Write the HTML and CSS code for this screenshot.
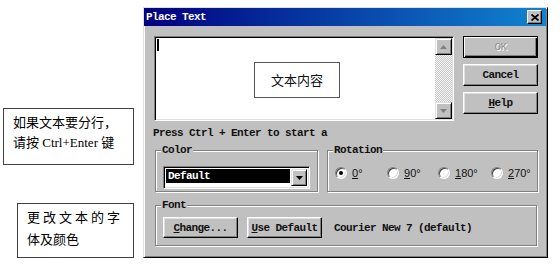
FILE: index.html
```html
<!DOCTYPE html>
<html lang="zh">
<head>
<meta charset="utf-8">
<title>Place Text</title>
<link rel="stylesheet" href="styles.css">
</head>
<body>
<div class="page">
  <div class="notes">
    <div class="note note-1">如果文本要分行，<br>请按 Ctrl+Enter 键</div>
    <div class="note note-2"><span class="spaced">更改文本的字</span><br>体及颜色</div>
  </div>
  <div class="dialog">
    <div class="titlebar">
      <span class="title">Place Text</span>
      <span class="close"><svg width="8" height="7" viewBox="0 0 8 7"><path d="M0.5 0.5 L7.5 6.5 M7.5 0.5 L0.5 6.5" stroke="#000" stroke-width="1.8" fill="none"/></svg></span>
    </div>
    <div class="dlg-body">
      <div class="top-row">
        <div class="textarea">
          <div class="ta-inner">
            <span class="caret"></span>
            <div class="content-note">文本内容</div>
          </div>
          <div class="vscroll">
            <div class="sbtn"><svg width="7" height="4" viewBox="0 0 7 4"><polygon points="3.5,0 7,4 0,4" fill="#808080"/></svg></div>
            <div class="track"></div>
            <div class="sbtn"><svg width="7" height="4" viewBox="0 0 7 4"><polygon points="0,0 7,0 3.5,4" fill="#808080"/></svg></div>
          </div>
        </div>
        <div class="side-buttons">
          <div class="btn btn-default disabled">OK</div>
          <div class="btn">Cancel</div>
          <div class="btn"><u>H</u>elp</div>
        </div>
      </div>
      <div class="hint">Press Ctrl + Enter to start a</div>
      <div class="groups-row">
        <div class="group color-group">
          <span class="group-label">Color</span>
          <div class="combo">
            <div class="combo-field"><span class="combo-value">Default</span></div>
            <div class="combo-btn"><svg width="7" height="4" viewBox="0 0 7 4"><polygon points="0,0 7,0 3.5,4" fill="#000"/></svg></div>
          </div>
        </div>
        <div class="group rotation-group">
          <span class="group-label">Rotation</span>
          <div class="radios">
            <div class="radio"><span class="radio-dot checked"></span><span class="radio-label"><u>0</u>°</span></div>
            <div class="radio"><span class="radio-dot"></span><span class="radio-label"><u>9</u>0°</span></div>
            <div class="radio"><span class="radio-dot"></span><span class="radio-label"><u>1</u>80°</span></div>
            <div class="radio"><span class="radio-dot"></span><span class="radio-label"><u>2</u>70°</span></div>
          </div>
        </div>
      </div>
      <div class="group font-group">
        <span class="group-label">Font</span>
        <div class="font-row">
          <div class="btn btn-small"><u>C</u>hange...</div>
          <div class="btn btn-small"><u>U</u>se Default</div>
          <span class="font-name">Courier New 7 (default)</span>
        </div>
      </div>
    </div>
  </div>
</div>
</body>
</html>
```
FILE: styles.css
```css
html, body {
  margin: 0;
  padding: 0;
  background: #fff;
}
body {
  width: 560px;
  height: 265px;
  overflow: hidden;
}
.page {
  display: flex;
  align-items: flex-start;
}

/* ---------- callout notes ---------- */
.notes {
  flex: none;
  width: 143px;
  display: flex;
  flex-direction: column;
  align-items: flex-start;
}
.note {
  box-sizing: border-box;
  border: 1px solid #404040;
  background: #fff;
  color: #000;
  font-family: "Liberation Serif", "Noto Sans CJK SC", serif;
  font-size: 13px;
  line-height: 20px;
  white-space: nowrap;
}
.note-1 {
  margin: 108px 0 0 3px;
  width: 131px;
  height: 57px;
  padding: 4px 0 0 9px;
}
.note-2 {
  margin: 38px 0 0 17px;
  width: 117px;
  height: 55px;
  padding: 3px 0 0 9px;
  line-height: 22px;
}
.spaced {
  letter-spacing: 3px;
}

/* ---------- dialog window ---------- */
.dialog {
  flex: none;
  box-sizing: border-box;
  margin-top: 7px;
  width: 405px;
  height: 251px;
  background: #c0c0c0;
  border: 1px solid;
  border-color: #dfdfdf #000 #000 #dfdfdf;
  box-shadow: inset 1px 1px #fff, inset -1px -1px #808080;
  padding: 0 1px 1px 0;
  display: flex;
  flex-direction: column;
  font-family: "Liberation Mono", monospace;
  font-size: 11px;
  font-weight: bold;
  line-height: 14px;
  letter-spacing: -0.6px;
  color: #111;
}
.titlebar {
  flex: none;
  height: 18px;
  background: linear-gradient(90deg, #000080, #1084d0);
  display: flex;
  align-items: center;
  justify-content: space-between;
  padding: 0 4px 0 2px;
}
.title {
  color: #fff;
  font-weight: bold;
}
.close {
  box-sizing: border-box;
  width: 15px;
  height: 14px;
  background: #c0c0c0;
  border: 1px solid;
  border-color: #fff #000 #000 #fff;
  box-shadow: inset -1px -1px #808080;
  display: flex;
  align-items: center;
  justify-content: center;
}
.close svg { display: block; }

.dlg-body {
  padding: 10px 8px 0 10px;
  display: flex;
  flex-direction: column;
}
.top-row {
  display: flex;
  gap: 9px;
}

/* text area */
.textarea {
  box-sizing: border-box;
  width: 300px;
  height: 85px;
  background: #fff;
  border: 1px solid;
  border-color: #808080 #fff #fff #808080;
  box-shadow: inset 1px 1px #000, inset -1px -1px #dfdfdf;
  padding: 1px;
  display: flex;
}
.ta-inner {
  flex: 1;
  position: relative;
}
.caret {
  display: block;
  width: 2px;
  height: 12px;
  margin: 1px 0 0 1px;
  background: #000;
}
.content-note {
  position: absolute;
  left: 98px;
  top: 24px;
  box-sizing: border-box;
  width: 86px;
  height: 36px;
  border: 1px solid #555;
  background: #fff;
  display: flex;
  align-items: center;
  justify-content: center;
  font-family: "Noto Sans CJK SC", sans-serif;
  font-size: 13px;
  font-weight: normal;
  letter-spacing: 0;
  color: #111;
}
.vscroll {
  flex: none;
  width: 17px;
  display: flex;
  flex-direction: column;
}
.sbtn {
  box-sizing: border-box;
  height: 17px;
  background: #c0c0c0;
  border: 1px solid;
  border-color: #dfdfdf #000 #000 #dfdfdf;
  box-shadow: inset 1px 1px #fff, inset -1px -1px #808080;
  display: flex;
  align-items: center;
  justify-content: center;
}
.sbtn svg { display: block; }
.track {
  flex: 1;
  background-color: #e4e4e4;
  background-image: repeating-conic-gradient(#c8c8c8 0 25%, #f4f4f4 0 50%);
  background-size: 2px 2px;
}

/* buttons */
.side-buttons {
  width: 75px;
  display: flex;
  flex-direction: column;
  gap: 6px;
}
.btn {
  box-sizing: border-box;
  height: 22px;
  background: #c0c0c0;
  border: 1px solid;
  border-color: #fff #000 #000 #fff;
  box-shadow: inset -1px -1px #808080, inset 1px 1px #dfdfdf;
  display: flex;
  align-items: center;
  justify-content: center;
  white-space: nowrap;
}
.btn-default {
  border-color: #000;
  box-shadow: inset 1px 1px #fff, inset -1px -1px #000, inset -2px -2px #808080;
}
.disabled {
  color: #909090;
  font-weight: normal;
  text-shadow: 1px 1px #fff;
}
.btn-small {
  width: 75px;
  height: 21px;
}

.hint {
  margin: 5px 0 0 -1px;
  white-space: nowrap;
}

/* group boxes */
.groups-row {
  display: flex;
  gap: 9px;
  margin: 10px 0 0 1px;
}
.group {
  position: relative;
  box-sizing: border-box;
  border: 1px solid #808080;
  box-shadow: inset 1px 1px #fff, 1px 1px #fff;
  padding: 15px 7px 2px;
}
.group-label {
  position: absolute;
  top: -7px;
  left: 5px;
  padding: 0 1px;
  line-height: 12px;
  background: #c0c0c0;
}
.color-group {
  width: 163px;
}
.rotation-group {
  width: 211px;
}
.font-group {
  width: 382px;
  margin: 13px 0 0 1px;
  padding: 11px 7px 7px;
}

/* combo box */
.combo {
  box-sizing: border-box;
  width: 147px;
  height: 23px;
  background: #fff;
  border: 1px solid;
  border-color: #808080 #fff #fff #808080;
  box-shadow: inset 1px 1px #000, inset -1px -1px #dfdfdf;
  padding: 2px;
  display: flex;
}
.combo-field {
  flex: 1;
  margin-right: 1px;
}
.combo-value {
  display: block;
  height: 14px;
  line-height: 14px;
  background: #000;
  color: #fff;
  padding-left: 2px;
}
.combo-btn {
  box-sizing: border-box;
  width: 16px;
  background: #c0c0c0;
  border: 1px solid;
  border-color: #dfdfdf #000 #000 #dfdfdf;
  box-shadow: inset 1px 1px #fff, inset -1px -1px #808080;
  display: flex;
  align-items: center;
  justify-content: center;
}
.combo-btn svg { display: block; }

/* radios */
.radios {
  display: grid;
  grid-template-columns: 52px 51px 53px auto;
  height: 14px;
  align-items: center;
}
.radio {
  display: flex;
  align-items: center;
  gap: 5px;
}
.radio-dot {
  position: relative;
  box-sizing: border-box;
  width: 12px;
  height: 12px;
  border-radius: 50%;
  background: #fff;
  border: 1px solid;
  border-color: #808080 #fff #fff #808080;
  box-shadow: inset 1px 1px #404040, inset -1px -1px #dfdfdf;
}
.radio-dot.checked::after {
  content: "";
  position: absolute;
  left: 3px;
  top: 3px;
  width: 4px;
  height: 4px;
  border-radius: 50%;
  background: #000;
}
.radio-label {
  font-family: "Liberation Sans", sans-serif;
  font-size: 11px;
  font-weight: normal;
  letter-spacing: 0;
}

/* font row */
.font-row {
  display: flex;
  align-items: center;
  gap: 9px;
}
.font-name {
  margin-left: 3px;
  white-space: nowrap;
}
```
